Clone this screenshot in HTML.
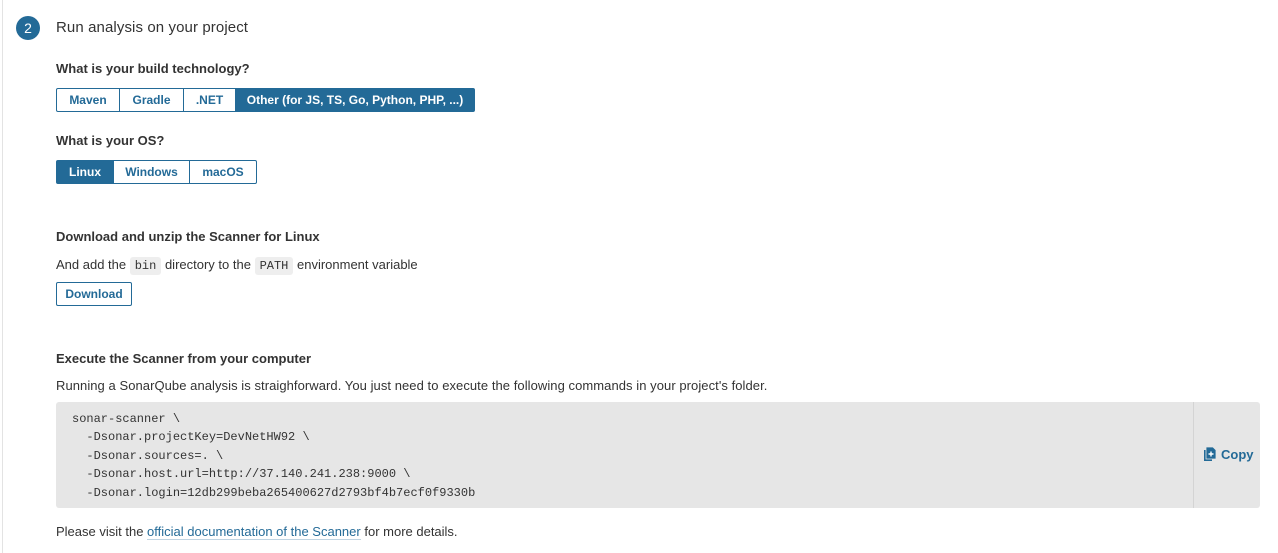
<!DOCTYPE html>
<html><head><style>
*{box-sizing:border-box;margin:0;padding:0}
body{width:1278px;height:553px;background:#fff;font-family:"Liberation Sans",sans-serif;color:#333;font-size:13px;position:relative;overflow:hidden}
.abs{position:absolute;white-space:nowrap}
.lb{position:absolute;left:2px;top:0;width:1px;height:553px;background:#e3e3e3}
.circ{left:16px;top:16px;width:24px;height:24px;border-radius:50%;background:#236a97;color:#fff;font-size:14px;text-align:center;line-height:24px}
h3{font-size:13px;font-weight:bold;color:#333}
.bg{position:absolute;display:flex;height:24px}
.bg span{border:1px solid #236a97;color:#236a97;font-weight:bold;font-size:12px;line-height:22px;text-align:center;margin-left:-1px}
.bg span:first-child{margin-left:0;border-radius:2px 0 0 2px}
.bg span:last-child{border-radius:0 2px 2px 0}
.bg span.on{background:#236a97;color:#fff}
code{font-family:"Liberation Mono",monospace;font-size:12px;background:#eee;padding:2px 5px;border-radius:3px;color:#333}
.code{left:56px;top:402px;width:1204px;height:106px;background:#e6e6e6;border-radius:3px}
.code pre{position:absolute;left:16px;top:8px;font-family:"Liberation Mono",monospace;font-size:12px;line-height:18.4px;color:#333}
.div{position:absolute;left:1137px;top:0;width:1px;height:106px;background:#d4d4d4}
a{color:#236a97;text-decoration:none;border-bottom:1px solid #c0d4e2}
</style></head><body>
<div class="lb"></div>
<div class="abs circ">2</div>
<div class="abs" style="left:56px;top:19px;font-size:15px;color:#333;letter-spacing:0.1px">Run analysis on your project</div>
<h3 class="abs" style="left:56px;top:61px">What is your build technology?</h3>
<div class="bg" style="left:56px;top:88px">
<span style="width:64px">Maven</span><span style="width:65px">Gradle</span><span style="width:53px">.NET</span><span class="on" style="width:240px">Other (for JS, TS, Go, Python, PHP, ...)</span></div>
<h3 class="abs" style="left:56px;top:133px">What is your OS?</h3>
<div class="bg" style="left:56px;top:160px">
<span class="on" style="width:58px">Linux</span><span style="width:77px">Windows</span><span style="width:68px">macOS</span></div>
<h3 class="abs" style="left:56px;top:229px">Download and unzip the Scanner for Linux</h3>
<div class="abs" style="left:56px;top:257px">And add the <code>bin</code> directory to the <code>PATH</code> environment variable</div>
<div class="abs" style="left:56px;top:282px;width:76px;height:24px;border:1px solid #236a97;border-radius:2px;color:#236a97;font-weight:bold;font-size:12px;line-height:22px;text-align:center">Download</div>
<h3 class="abs" style="left:56px;top:351px">Execute the Scanner from your computer</h3>
<div class="abs" style="left:56px;top:378px;letter-spacing:0.06px">Running a SonarQube analysis is straighforward. You just need to execute the following commands in your project's folder.</div>
<div class="abs code"><pre>sonar-scanner \
  -Dsonar.projectKey=DevNetHW92 \
  -Dsonar.sources=. \
  -Dsonar.host.url=http://37.140.241.238:9000 \
  -Dsonar.login=12db299beba265400627d2793bf4b7ecf0f9330b</pre>
<div class="div"></div>
<div class="abs" style="left:1148px;top:45px;color:#236a97;font-weight:bold;font-size:13px">
<svg width="12" height="14" viewBox="0 0 12 14" style="vertical-align:-2px;margin-right:5px"><rect x="0" y="3" width="8" height="11" fill="#236a97"/><path d="M2 0h7l3 3v9H2z" fill="#236a97" stroke="#e6e6e6" stroke-width="0.8"/><path d="M7 4.5v5M4.5 7h5" stroke="#fff" stroke-width="1.4"/></svg>Copy</div>
</div>
<div class="abs" style="left:56px;top:524px">Please visit the <a>official documentation of the Scanner</a> for more details.</div>
</body></html>
